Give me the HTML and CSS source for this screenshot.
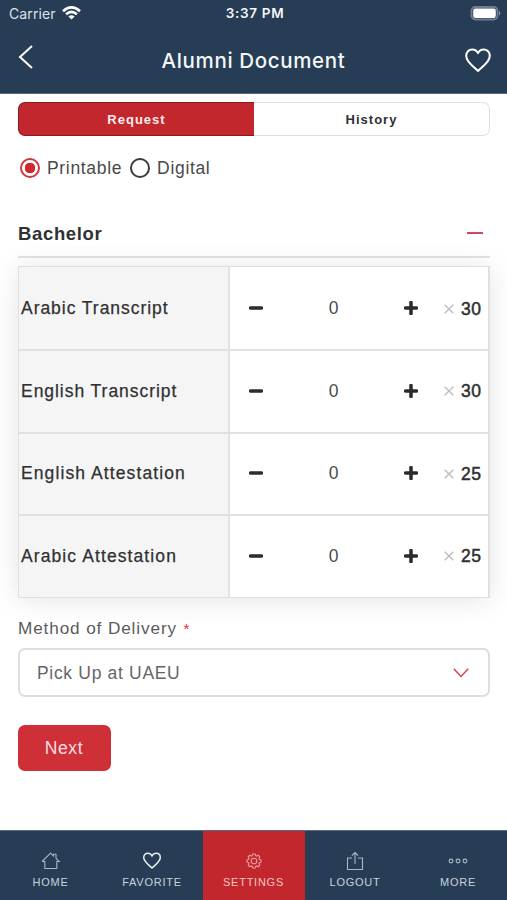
FILE: index.html
```html
<!DOCTYPE html>
<html lang="en">
<head>
<meta charset="utf-8">
<title>Alumni Document</title>
<link rel="stylesheet" href="styles.css">
</head>
<body>
<header class="top">
  <div class="status">
    <div class="carrier"><span>Carrier</span>
      <svg width="19" height="14" viewBox="0 0 19 14" fill="none" stroke="#fff" stroke-width="2.6"><path d="M1 5.2Q9.500-2.400 18 5.200M4.100 8.300Q9.500 3.600 14.900 8.300"/><path d="M9.500 13.500 6.400 10.600Q9.500 8 12.600 10.600Z" fill="#fff" stroke="none"/></svg>
    </div>
    <span class="time">3:37 PM</span>
    <svg class="battery" width="31" height="15" viewBox="0 0 31 15"><rect x="1.500" y="1" width="26" height="12.500" rx="4" fill="none" stroke="#6f7d90" stroke-width="2"/><rect x="3.200" y="2.500" width="22.600" height="9.500" rx="2.200" fill="#fff"/><path d="M29 5Q31.500 7.200 29 9.500Z" fill="#8d98a7"/></svg>
  </div>
  <div class="bar">
    <svg width="16" height="24" viewBox="0 0 16 24" fill="none" stroke="#fff" stroke-width="2"><path d="M14 1 2 12 14 23"/></svg>
    <h1>Alumni Document</h1>
    <svg width="26" height="25" viewBox="0 0 26 25" fill="none" stroke="#fff" stroke-width="2" stroke-linejoin="round"><path d="M13 23C9.500 19 1.200 14.500 1.200 7.800 1.200 4.200 3.900 1.500 7.200 1.500 9.700 1.500 12 3 13 5.200 14 3 16.300 1.500 18.800 1.500 22.100 1.500 24.800 4.200 24.800 7.800 24.800 14.500 16.500 19 13 23Z"/></svg>
  </div>
</header>
<main>
  <div class="tabs"><div class="tab on">Request</div><div class="tab">History</div></div>
  <div class="radios">
    <span class="radio checked"></span><span class="lbl-print">Printable</span>
    <span class="radio"></span><span>Digital</span>
  </div>
  <div class="section"><h2>Bachelor</h2><span class="collapse"></span></div>
  <div class="table">
    <div class="row"><div class="name">Arabic Transcript</div><div class="qty"><svg class="minus" width="14" height="14"><path d="M1.500 7h11"/></svg><span class="count">0</span><svg class="plus" width="14" height="14"><path d="M1.500 7h11M7 1.500v11"/></svg><svg class="times" width="10" height="10"><path d="M.7.7 9.300 9.300M9.300.7.7 9.300"/></svg><span class="price">30</span></div></div>
    <div class="row"><div class="name">English Transcript</div><div class="qty"><svg class="minus" width="14" height="14"><path d="M1.500 7h11"/></svg><span class="count">0</span><svg class="plus" width="14" height="14"><path d="M1.500 7h11M7 1.500v11"/></svg><svg class="times" width="10" height="10"><path d="M.7.7 9.300 9.300M9.300.7.7 9.300"/></svg><span class="price">30</span></div></div>
    <div class="row"><div class="name wide">English Attestation</div><div class="qty"><svg class="minus" width="14" height="14"><path d="M1.500 7h11"/></svg><span class="count">0</span><svg class="plus" width="14" height="14"><path d="M1.500 7h11M7 1.500v11"/></svg><svg class="times" width="10" height="10"><path d="M.7.7 9.300 9.300M9.300.7.7 9.300"/></svg><span class="price">25</span></div></div>
    <div class="row"><div class="name wide">Arabic Attestation</div><div class="qty"><svg class="minus" width="14" height="14"><path d="M1.500 7h11"/></svg><span class="count">0</span><svg class="plus" width="14" height="14"><path d="M1.500 7h11M7 1.500v11"/></svg><svg class="times" width="10" height="10"><path d="M.7.7 9.300 9.300M9.300.7.7 9.300"/></svg><span class="price">25</span></div></div>
  </div>
  <div class="field">Method of Delivery <span class="req">*</span></div>
  <div class="select"><span>Pick Up at UAEU</span>
    <svg width="16" height="10" viewBox="0 0 16 10" fill="none" stroke="#d8434b" stroke-width="1.500"><path d="M.8.8 8 8.500 15.200.8"/></svg>
  </div>
  <button class="next">Next</button>
</main>
<nav>
  <div class="item"><svg width="20" height="20" viewBox="0 0 20 20"><path d="M1.500 10 9.500 2.200 12.500 5V3.200H15V7.300L18.200 10.500H15.800V17.500H3.800V10.500H1.500Z"/></svg><span>HOME</span></div>
  <div class="item fav"><svg width="20" height="20" viewBox="0 0 20 20"><path d="M10 17C7 14 1.700 10.700 1.700 6.500 1.700 4 3.500 2.300 5.800 2.300 7.600 2.300 9.200 3.300 10 4.800 10.800 3.300 12.400 2.300 14.200 2.300 16.500 2.300 18.300 4 18.300 6.500 18.300 10.700 13 14 10 17Z"/></svg><span>FAVORITE</span></div>
  <div class="item active"><svg width="20" height="20" viewBox="0 0 20 20"><circle cx="10" cy="10" r="2.800"/><path d="M8.800 3h2.400l.5 1.700 1 .4 1.600-.8 1.500 1.600-.8 1.500.4 1 1.600.5v2.200l-1.600.5-.4 1 .8 1.500-1.500 1.600-1.600-.8-1 .4-.5 1.700H8.800l-.5-1.700-1-.4-1.600.8-1.500-1.600.8-1.500-.4-1L3 11.100V8.900l1.600-.5.4-1-.8-1.500 1.500-1.600 1.600.8 1-.4Z"/></svg><span>SETTINGS</span></div>
  <div class="item"><svg width="20" height="20" viewBox="0 0 20 20"><path d="M7.200 7H2.500V18.500H17.500V7H12.800M10 13V1.500M6.800 4.700 10 1.500 13.200 4.700"/></svg><span>LOGOUT</span></div>
  <div class="item"><svg width="20" height="20" viewBox="0 0 20 20"><circle cx="3" cy="10" r="1.900"/><circle cx="10" cy="10" r="1.900"/><circle cx="17" cy="10" r="1.900"/></svg><span>MORE</span></div>
</nav>
</body>
</html>
```
FILE: styles.css
```css
* { box-sizing: border-box; }
body {
  margin: 0;
  width: 507px;
  height: 900px;
  display: flex;
  flex-direction: column;
  overflow: hidden;
  background: #fff;
  color: #303032;
  font: 17px/20px "Liberation Sans", Arial, sans-serif;
}
svg { display: block; flex: none; }
h1, h2 { margin: 0; }

.top { height: 94px; background: #273d55; border-bottom: 1px solid #516681; color: #f4f6f8; }
.status {
  height: 27px;
  padding: 0 6px 0 9px;
  display: grid;
  grid-template-columns: 1fr auto 1fr;
  align-items: center;
  font: 14px/27px Inter, sans-serif;
}
.carrier { display: flex; align-items: center; gap: 6px; color: #dfe4e9; font-size: 14px; line-height: 26px; letter-spacing: .1px; }
.carrier svg { margin-top: -1px; }
.time { font-weight: 600; font-size: 13.500px; line-height: 27px; letter-spacing: .7px; }
.battery { justify-self: end; }
.bar { height: 66px; padding: 0 16px 0 18px; display: flex; align-items: center; justify-content: space-between; }
.bar > svg:first-child { margin-bottom: 6px; }
.bar h1 { font: 500 20.500px/26px Inter, sans-serif; letter-spacing: .65px; margin: 2px 0 0 8px; }

main { flex: 1; padding: 8px 17px 0 18px; }
.tabs { display: grid; grid-template-columns: 236px 1fr; height: 34px; }
.tab {
  display: flex; align-items: center; justify-content: center;
  padding-top: 2px;
  border: 1.500px solid #dfdfdf; border-left: 0; border-radius: 0 7px 7px 0;
  font-weight: bold; font-size: 13px; letter-spacing: 1px;
}
.tab.on { background: #c1272d; border: 1px solid #8d171c; border-radius: 7px 0 0 7px; border-right: 0; color: #fdebeb; }
.radios { display: flex; align-items: center; height: 20px; margin: 22px 0 0 2px; font-size: 17.500px; letter-spacing: .67px; color: #49494b; }
.radio { width: 20px; height: 20px; border: 2px solid #3b3b3d; border-radius: 50%; margin-right: 7px; }
.radio.checked { border-color: #d3353d; background: radial-gradient(circle, #d3272f 5px, #fff 5.500px); }
.lbl-print { margin-right: 8px; }
.section { height: 49px; margin-top: 31px; padding: 2px 7px 0 0; display: flex; align-items: center; justify-content: space-between; border-bottom: 2px solid #e2e2e2; }
.section h2 { font-size: 18.500px; line-height: 22px; letter-spacing: .65px; }
.collapse { width: 16px; height: 2px; margin-bottom: 1px; background: #d74750; }

.table { margin-top: 8px; height: 332px; border: 1px solid #e0e0e0; border-right-width: 2px; display: grid; grid-template-rows: 82px 83px 82px 83px; background: #fff; box-shadow: 0 2px 26px rgba(0, 0, 0, .11); }
.row { display: grid; grid-template-columns: 211px 1fr; }
.row + .row { border-top: 2px solid #e1e1e1; }
.name { display: flex; align-items: center; padding-left: 2px; background: #f5f5f5; border-right: 2px solid #e3e3e3; font-size: 17.500px; letter-spacing: .96px; -webkit-text-stroke: .25px #303032; }
.name.wide { letter-spacing: 1.1px; }
.row + .row .name, .row + .row .qty { padding-bottom: 2px; }
.qty { display: flex; align-items: center; padding-left: 19px; }
.minus, .plus { stroke: #2b2b2d; stroke-width: 3.500; stroke-linecap: round; }
.count { width: 141px; text-align: center; font-size: 17.500px; color: #4a4a4c; }
.times { stroke: #bdbdbd; stroke-width: 1.400; margin: 1px 7px 0 26px; }
.price { font-size: 17.500px; letter-spacing: .6px; padding-top: 1px; -webkit-text-stroke: .5px #303032; }

.field { margin-top: 20px; height: 20px; font-size: 17.200px; letter-spacing: .87px; color: #5b5b5d; }
.req { color: #df3338; font-size: 15px; margin-left: 1px; }
.select { height: 49px; margin-top: 10px; padding: 1px 19px 0 17px; display: flex; align-items: center; justify-content: space-between; border: 2px solid #dedede; border-radius: 7px; font-size: 17.500px; letter-spacing: .68px; color: #666668; }
.next { display: block; width: 93px; height: 46px; margin-top: 28px; padding: 1px 1px 0 0; border: 0; border-radius: 7px; background: #cf3038; color: #fbdfe0; font: 17.500px "Liberation Sans", Arial, sans-serif; letter-spacing: .6px; }

nav { height: 70px; display: grid; grid-template-columns: 101px 102px 102px 100px 102px; background: #273d55; border-top: 1px solid #586b82; }
.item { display: flex; flex-direction: column; align-items: center; padding-top: 20px; color: #c9d3dd; font-size: 11px; line-height: 14px; letter-spacing: .75px; }
.item svg { margin-bottom: 7px; fill: none; stroke: #a9b7c5; stroke-width: 1.100; }
.item.fav svg { stroke: #e8edf1; stroke-width: 1.500; }
.item.active { background: #c1272d; color: #f8c4c6; padding-right: 1px; }
.item.active svg { stroke: #ec9da1; }
.item:last-child { padding-left: 4px; }
.item span { margin-top: -3px; }
```
